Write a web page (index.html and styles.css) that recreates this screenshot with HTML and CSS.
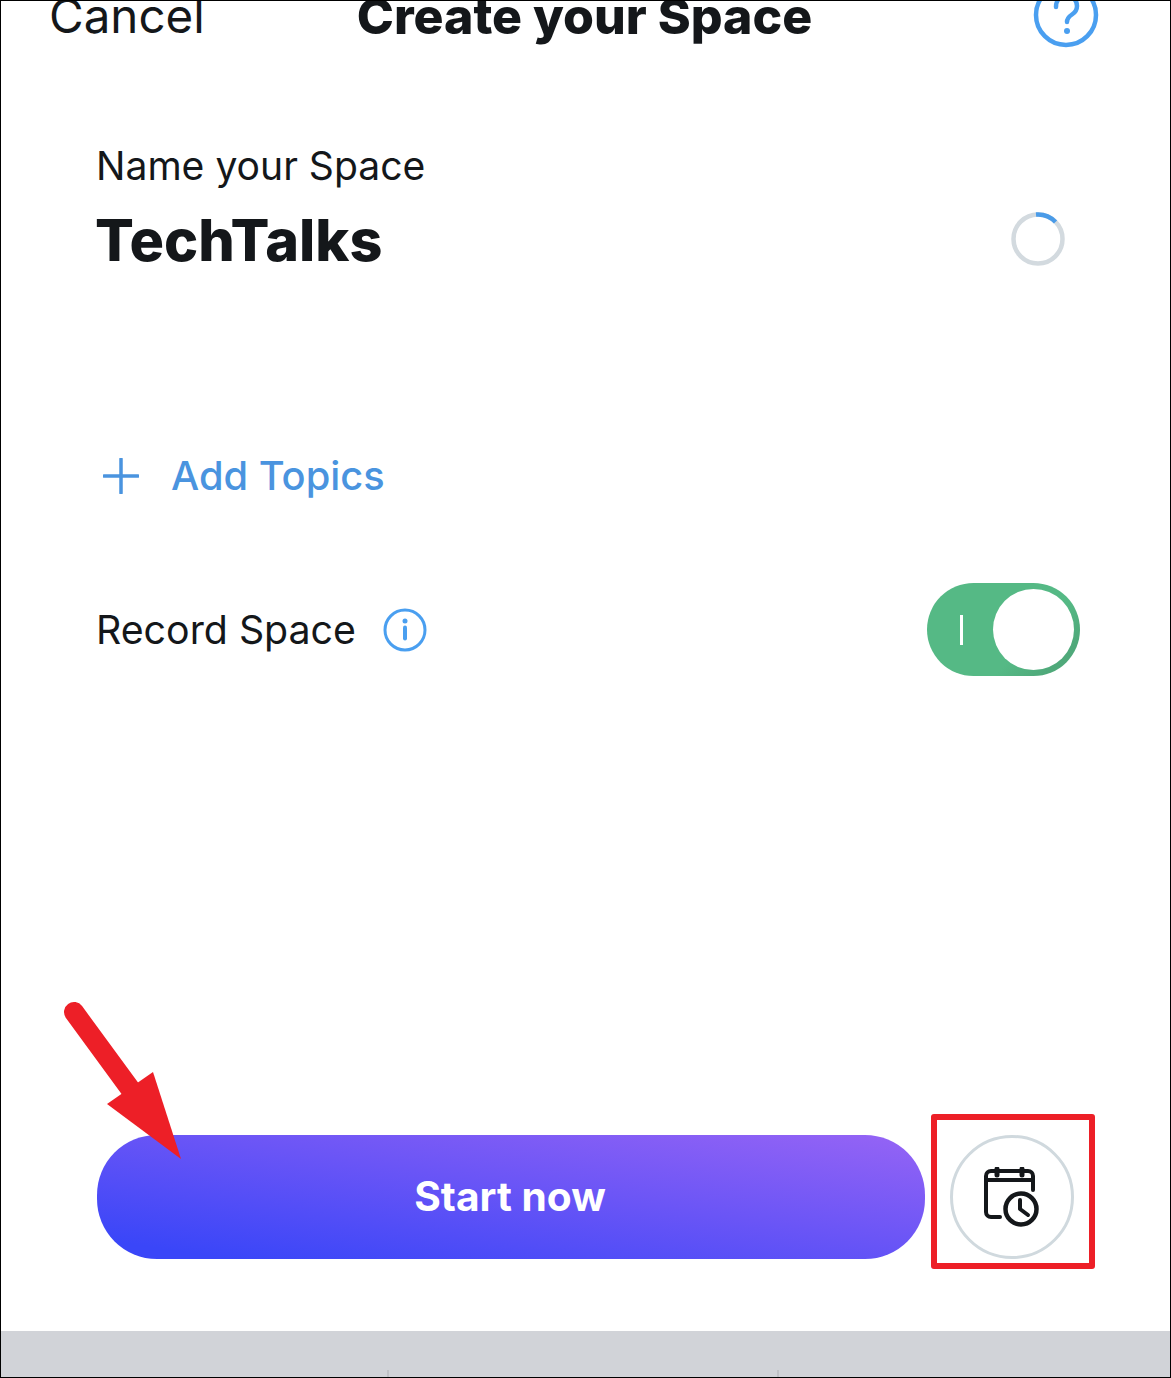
FILE: index.html
```html
<!DOCTYPE html>
<html lang="en">
<head>
  <meta charset="UTF-8">
  <title>Create your Space</title>
  <link rel="stylesheet" href="styles.css">
</head>
<body>

  <div class="pantalla">
    <header class="cabecera">
      <span class="cancelar">Cancel</span>
      <h1 class="titulo">Create your Space</h1>
      <svg class="ayuda" viewBox="0 0 66 66" fill="none" stroke="#4a9ff0" stroke-width="4.5" stroke-linecap="round">
        <circle cx="33" cy="33" r="30"/>
        <path d="M23 25c0-7 4.500-11 10.500-11S44 18 44 24c0 4-2 6.500-5 8.500-3 2-5 3.500-5 7.500"/>
        <circle cx="34" cy="49" r="3" fill="#4a9ff0" stroke="none"/>
      </svg>
    </header>

    <section class="nombre">
      <div>
        <p class="etiqueta">Name your Space</p>
        <p class="valor">TechTalks</p>
      </div>
      <svg class="carga" viewBox="0 0 54 54" fill="none" stroke-width="4.500">
        <circle cx="27" cy="27" r="24.500" stroke="#d3dadf"/>
        <path d="M25 2.600a24.500 24.500 0 0 1 19.500 7.400" stroke="#4a9be8"/>
      </svg>
    </section>

    <div class="temas">
      <svg class="mas" viewBox="0 0 36 36" fill="none" stroke="#4a94df" stroke-width="3.500" stroke-linecap="round">
        <path d="M18 1v34M1 18h34"/>
      </svg>
      <span>Add Topics</span>
    </div>

    <div class="grabar">
      <span class="grabar-texto">Record Space</span>
      <svg class="info" viewBox="0 0 44 44" fill="none" stroke="#4a9ff0" stroke-width="3">
        <circle cx="22" cy="22" r="20"/>
        <path d="M22 19.500v11" stroke-width="4" stroke-linecap="round"/>
        <circle cx="22" cy="13" r="2.500" fill="#4a9ff0" stroke="none"/>
      </svg>
      <div class="interruptor">
        <span class="marca"></span>
        <span class="perilla"></span>
      </div>
    </div>

    <div class="acciones">
      <button class="empezar">Start now</button>
      <button class="programar">
        <svg class="calendario" viewBox="0 0 56 60" fill="none" stroke="#14171a" stroke-width="4" stroke-linecap="round" stroke-linejoin="round">
          <path d="M16 50H7a5 5 0 0 1-5-5V9a5 5 0 0 1 5-5h37a5 5 0 0 1 5 5v14"/>
          <path d="M2 13h47"/>
          <path d="M13 2v6M38 2v6" stroke-width="5"/>
          <circle cx="37" cy="42" r="15.500" stroke-width="4.500"/>
          <path d="M36 33v9l8 6"/>
        </svg>
      </button>
    </div>

    <div class="teclado">
      <span class="tope"></span>
      <span class="tope"></span>
    </div>

    <span class="recuadro"></span>
    <svg class="flecha" viewBox="0 0 130 170" fill="none">
      <path d="M14 22l60 82" stroke="#ed1f27" stroke-width="20" stroke-linecap="round"/>
      <path d="M93 82L47 114l74 55z" fill="#ed1f27"/>
    </svg>
  </div>

</body>
</html>
```

FILE: styles.css
```css
* {
  box-sizing: border-box;
}

body {
  margin: 0;
  background: #fff;
  font-family: Inter, "Liberation Sans", sans-serif;
  color: #14171a;
}

p {
  margin: 0;
}

.pantalla {
  position: relative;
  width: 1171px;
  height: 1378px;
  overflow: hidden;
  display: flex;
  flex-direction: column;
  background: #fff;
  border: 1px solid #000;
}

.cabecera {
  display: grid;
  grid-template-columns: 1fr auto 1fr;
  align-items: center;
  height: 56px;
  margin-top: -18px;
  padding: 0 71px;
}

.cancelar {
  margin-left: -23px;
  font-size: 47.500px;
  font-weight: 400;
}

.titulo {
  margin: 0 2px 0 0;
  font-size: 50px;
  font-weight: 800;
}

.ayuda {
  width: 66px;
  height: 66px;
  justify-self: end;
  margin-top: -1px;
}

.nombre {
  display: flex;
  justify-content: space-between;
  align-items: flex-end;
  margin-top: 103px;
  padding: 0 105px 0 95px;
}

.etiqueta {
  font-size: 39.100px;
  line-height: 48px;
}

.valor {
  margin: 14px 0 0 -1px;
  font-size: 57.500px;
  line-height: 72px;
  font-weight: 800;
}

.carga {
  width: 54px;
  height: 54px;
  margin-bottom: 10px;
}

.temas {
  display: flex;
  align-items: center;
  gap: 32px;
  margin-top: 176px;
  padding-left: 102px;
  font-size: 39.800px;
  line-height: 48px;
  font-weight: 500;
  color: #4a94df;
}

.mas {
  width: 36px;
  height: 36px;
}

.grabar {
  display: flex;
  align-items: center;
  margin-top: 83px;
  padding: 0 90px 0 95px;
  font-size: 39.300px;
}

.info {
  width: 44px;
  height: 44px;
  margin-left: 27px;
}

.interruptor {
  display: flex;
  align-items: center;
  justify-content: space-between;
  width: 153px;
  height: 93px;
  margin-left: auto;
  padding: 0 6px 0 33px;
  border-radius: 47px;
  background: linear-gradient(135deg, #55b985 65%, #4fa97a 85%);
}

.marca {
  width: 3px;
  height: 30px;
  background: #fff;
}

.perilla {
  width: 81px;
  height: 81px;
  border-radius: 50%;
  background: #fff;
}

.acciones {
  display: flex;
  gap: 25px;
  margin-top: 459px;
  padding-left: 96px;
}

.empezar {
  width: 828px;
  height: 124px;
  padding: 0 2px 2px 0;
  border: none;
  border-radius: 60px;
  background: linear-gradient(to top right, #3a46f8 8%, #6a55f6 55%, #9664f5 100%);
  color: #fff;
  font-family: inherit;
  font-size: 40.700px;
  font-weight: 700;
}

.programar {
  display: flex;
  align-items: center;
  justify-content: center;
  width: 124px;
  height: 124px;
  padding: 0;
  border: 3px solid #d0d9de;
  border-radius: 50%;
  background: #fff;
}

.calendario {
  width: 56px;
  height: 60px;
}

.teclado {
  display: flex;
  justify-content: center;
  gap: 388px;
  align-items: flex-end;
  height: 46px;
  margin-top: auto;
  padding-right: 5px;
  background: #d1d3d8;
}

.tope {
  width: 2px;
  height: 7px;
  background: #bfc1c6;
}

.recuadro {
  position: absolute;
  left: 930px;
  top: 1113px;
  width: 164px;
  height: 155px;
  border: 6px solid #ed1f27;
  border-radius: 3px;
}

.flecha {
  position: absolute;
  left: 59px;
  top: 989px;
  width: 130px;
  height: 170px;
}
```
